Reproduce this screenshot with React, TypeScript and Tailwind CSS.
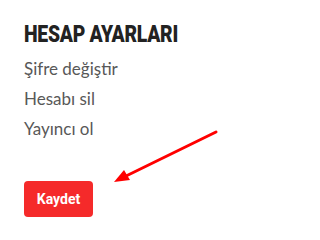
import React from 'react';

const links = ['Şifre değiştir', 'Hesabı sil', 'Yayıncı ol'];

const App: React.FC = () => {
  return (
    <div className="relative w-[284px] h-[234px] bg-white overflow-hidden">
      <div className="pl-6 pt-[21px]">
        <h2
          className="h-[27px] text-[23px] leading-[27px] font-black text-[#222] whitespace-nowrap"
          style={{ fontFamily: 'Roboto, sans-serif' }}
        >
          <span className="inline-block origin-left scale-x-[0.84] tracking-[-0.3px]">HESAP AYARLARI</span>
        </h2>
        <ul className="mt-[6px] flex flex-col" style={{ fontFamily: 'Lato, sans-serif' }}>
          {links.map((label) => (
            <li key={label} className="text-[17px] leading-[30px] text-[#585858]">
              {label}
            </li>
          ))}
        </ul>
        <button
          className="mt-[37px] w-[69px] h-9 rounded bg-[#f52a2a] text-white text-[14px] font-bold"
          style={{ fontFamily: 'Roboto, sans-serif' }}
        >
          Kaydet
        </button>
      </div>

      {/* annotation arrow */}
      <svg className="absolute left-0 top-0" width="284" height="234" viewBox="0 0 284 234">
        <line x1="216" y1="132" x2="124" y2="177" stroke="#ff0000" strokeWidth="3" strokeLinecap="round" />
        <polygon points="114,182 124,170 130,180" fill="#ff0000" />
      </svg>
    </div>
  );
};

export default App;
